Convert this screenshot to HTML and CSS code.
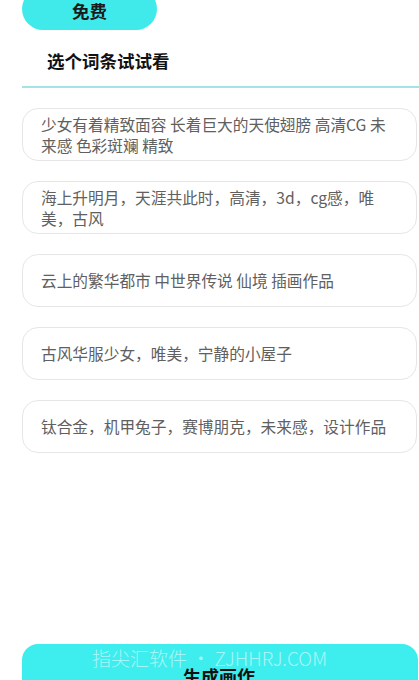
FILE: index.html
```html
<!DOCTYPE html>
<html lang="zh-CN">
<head>
<meta charset="utf-8">
<title>选个词条试试看</title>
<link rel="stylesheet" href="styles.css">
</head>
<body>
<div class="page">
  <div class="pill">免费</div>
  <div class="title">选个词条试试看</div>
  <div class="divider"></div>
  <div class="list">
    <div class="card">少女有着精致面容 长着巨大的天使翅膀 高清CG 未<br>来感 色彩斑斓 精致</div>
    <div class="card">海上升明月，天涯共此时，高清，3d，cg感，唯<br>美，古风</div>
    <div class="card">云上的繁华都市 中世界传说 仙境 插画作品</div>
    <div class="card">古风华服少女，唯美，宁静的小屋子</div>
    <div class="card">钛合金，机甲兔子，赛博朋克，未来感，设计作品</div>
  </div>
  <div class="button">
    <span class="btn-label">生成画作</span>
    <span class="watermark">指尖汇软件 • ZJHHRJ.COM</span>
  </div>
</div>
</body>
</html>
```
FILE: styles.css
```css
html, body {
  margin: 0;
  padding: 0;
  background: #ffffff;
}
body {
  font-family: "Noto Sans CJK SC", "Noto Sans", sans-serif;
}
.page {
  height: 680px;
  overflow: hidden;
  display: flex;
  flex-direction: column;
  padding-left: 22px;
  box-sizing: border-box;
}
.pill {
  width: 135px;
  height: 42px;
  margin-top: -12px;
  background: #40eaea;
  border-radius: 21px;
  display: flex;
  align-items: center;
  justify-content: center;
  padding-top: 3px;
  box-sizing: border-box;
  font-size: 17.5px;
  font-weight: 700;
  color: #1a1a1a;
}
.title {
  height: 56px;
  display: flex;
  align-items: center;
  padding-left: 25px;
  padding-top: 4px;
  box-sizing: border-box;
  font-size: 17.5px;
  font-weight: 700;
  color: #111111;
}
.divider {
  height: 2px;
  background: #a3e3e3;
}
.list {
  display: flex;
  flex-direction: column;
  gap: 20px;
  margin-top: 20px;
  margin-right: 2px;
}
.card {
  height: 53px;
  box-sizing: border-box;
  border: 1px solid #e6e6e6;
  border-radius: 16px;
  display: flex;
  align-items: center;
  padding: 0 10px 0 18px;
  font-size: 15.7px;
  line-height: 21px;
  color: #606060;
}
.button {
  position: relative;
  margin-top: auto;
  margin-right: 1px;
  margin-bottom: -26px;
  height: 62px;
  border-radius: 16px;
  background: #3eeded;
  display: flex;
  align-items: center;
  justify-content: center;
  padding-top: 1px;
  box-sizing: border-box;
}
.btn-label {
  font-size: 18px;
  font-weight: 700;
  color: #111111;
  margin-left: -2px;
}
.watermark {
  position: absolute;
  left: 70px;
  top: 2px;
  font-size: 19px;
  line-height: 24px;
  font-weight: 300;
  color: rgba(255, 255, 255, 0.55);
  white-space: nowrap;
}
```
